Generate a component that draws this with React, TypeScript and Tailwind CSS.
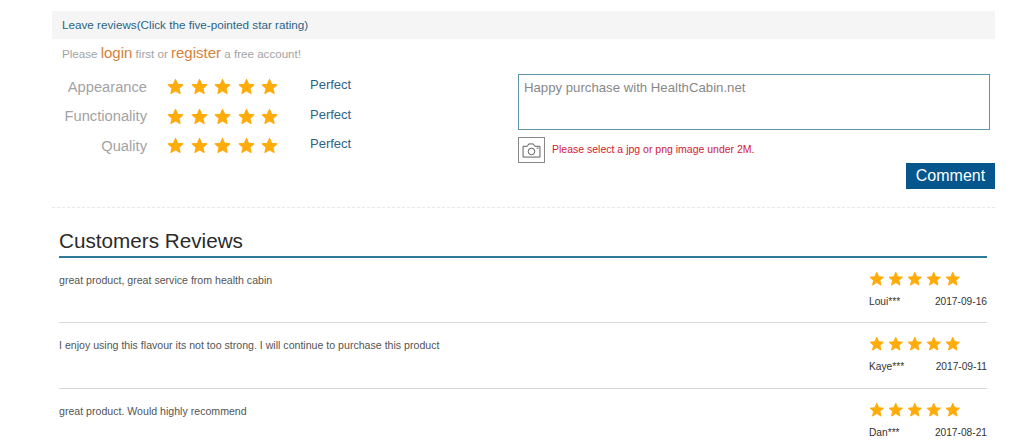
import { Fragment } from "react";

const ratings = ["Appearance", "Functionality", "Quality"];

const reviews = [
  { text: "great product, great service from health cabin", name: "Loui***", date: "2017-09-16" },
  { text: "I enjoy using this flavour its not too strong. I will continue to purchase this product", name: "Kaye***", date: "2017-09-11" },
  { text: "great product. Would highly recommend", name: "Dan***", date: "2017-08-21" },
];

function Star({ size }: { size: string }) {
  return (
    <svg viewBox="0 0 24 24" className={`${size} fill-[#ffab0a] stroke-[#ffab0a] stroke-[1.5]`} strokeLinejoin="round">
      <path d="M12 2l3 6.9 7.4.7-5.6 4.9 1.7 7.3L12 17.9l-6.5 3.9 1.7-7.3-5.6-4.9L9 8.9z" />
    </svg>
  );
}

function Stars({ gap, size }: { gap: string; size: string }) {
  return (
    <div className={`flex ${gap}`}>
      {[0, 1, 2, 3, 4].map((i) => (
        <Star key={i} size={size} />
      ))}
    </div>
  );
}

export default function App() {
  return (
    <div className="h-[447px] overflow-hidden bg-white pl-[52px] pr-[29px] pt-[11px] font-['Liberation_Sans',Arial,sans-serif]">
      {/* Leave a review */}
      <div className="flex h-[28px] items-center bg-[#f5f5f5] pl-[10px] text-[11.7px] text-[#2b6487]">
        Leave reviews(Click the five-pointed star rating)
      </div>
      <p className="mt-[4px] flex h-[20px] items-baseline pl-[10px] text-[11.6px] leading-[20px] text-[#a3a3a3]">
        <span>Please&nbsp;</span>
        <span className="text-[15px] text-[#d6813c]">login</span>
        <span>&nbsp;first or&nbsp;</span>
        <span className="text-[15px] text-[#d6813c]">register</span>
        <span>&nbsp;a free account!</span>
      </p>

      <div className="flex">
        <div className="w-[466px] pt-[9px]">
          {ratings.map((label) => (
            <div key={label} className="flex h-[29.5px] items-center">
              <span className="w-[95px] text-right text-[14.7px] text-[#a3a3a3]">{label}</span>
              <div className="ml-[20px] w-[143px]">
                <Stars gap="gap-[6.5px]" size="h-[17px] w-[17px]" />
              </div>
              <span className="-mt-[4px] text-[13px] text-[#2b6487]">Perfect</span>
            </div>
          ))}
        </div>

        <div className="w-[477px] pt-[11px]">
          <div className="mr-[5px] h-[56px] border border-[#5f95a8] px-[5px] py-[5px] text-[13.2px] leading-[16px] text-[#888]">
            Happy purchase with HealthCabin.net
          </div>
          <div className="mt-[7px] flex items-center">
            <div className="flex h-[26px] w-[27px] items-center justify-center border border-[#888]">
              <svg viewBox="0 0 20 16" className="h-[15px] w-[19px] fill-none stroke-[#555]">
                <path d="M1 3.5h4.5L7 1h5l1.5 2.5H19V15H1z" />
                <circle cx="10" cy="9" r="3.5" />
                <path d="M15.5 5.5h2" />
              </svg>
            </div>
            <span className="ml-[7px] text-[10.5px] text-[#d4202f]">Please select a jpg or png image under 2M.</span>
          </div>
          <div className="flex justify-end">
            <button className="flex h-[26px] w-[89px] items-center justify-center bg-[#04568c] text-[16px] text-white">
              Comment
            </button>
          </div>
        </div>
      </div>

      <div className="mt-[18px] border-t border-dashed border-[#e8e8e8]" />

      {/* Reviews */}
      <div className="mx-[7px] mt-[21px] w-[928px]">
        <h2 className="border-b-2 border-[#2f7a98] pb-[4px] text-[20.7px] leading-[23px] text-[#2b2b2b]">
          Customers Reviews
        </h2>
        {reviews.map((r, i) => (
          <Fragment key={r.name}>
            {i > 0 && <div className="border-t border-[#d8d8d8]" />}
            <div className={`flex justify-between pt-[13px] ${i === 0 ? "h-[64px]" : "h-[64.5px]"}`}>
              <p className="pt-[3px] text-[10.6px] leading-[13px] text-[#555]">{r.text}</p>
              <div className="w-[118px]">
                <Stars gap="gap-[3.5px]" size="h-[15.5px] w-[15.5px]" />
                <div className="mt-[8.5px] flex justify-between text-[10.2px] leading-[13px] text-[#333]">
                  <span>{r.name}</span>
                  <span>{r.date}</span>
                </div>
              </div>
            </div>
          </Fragment>
        ))}
      </div>
    </div>
  );
}
